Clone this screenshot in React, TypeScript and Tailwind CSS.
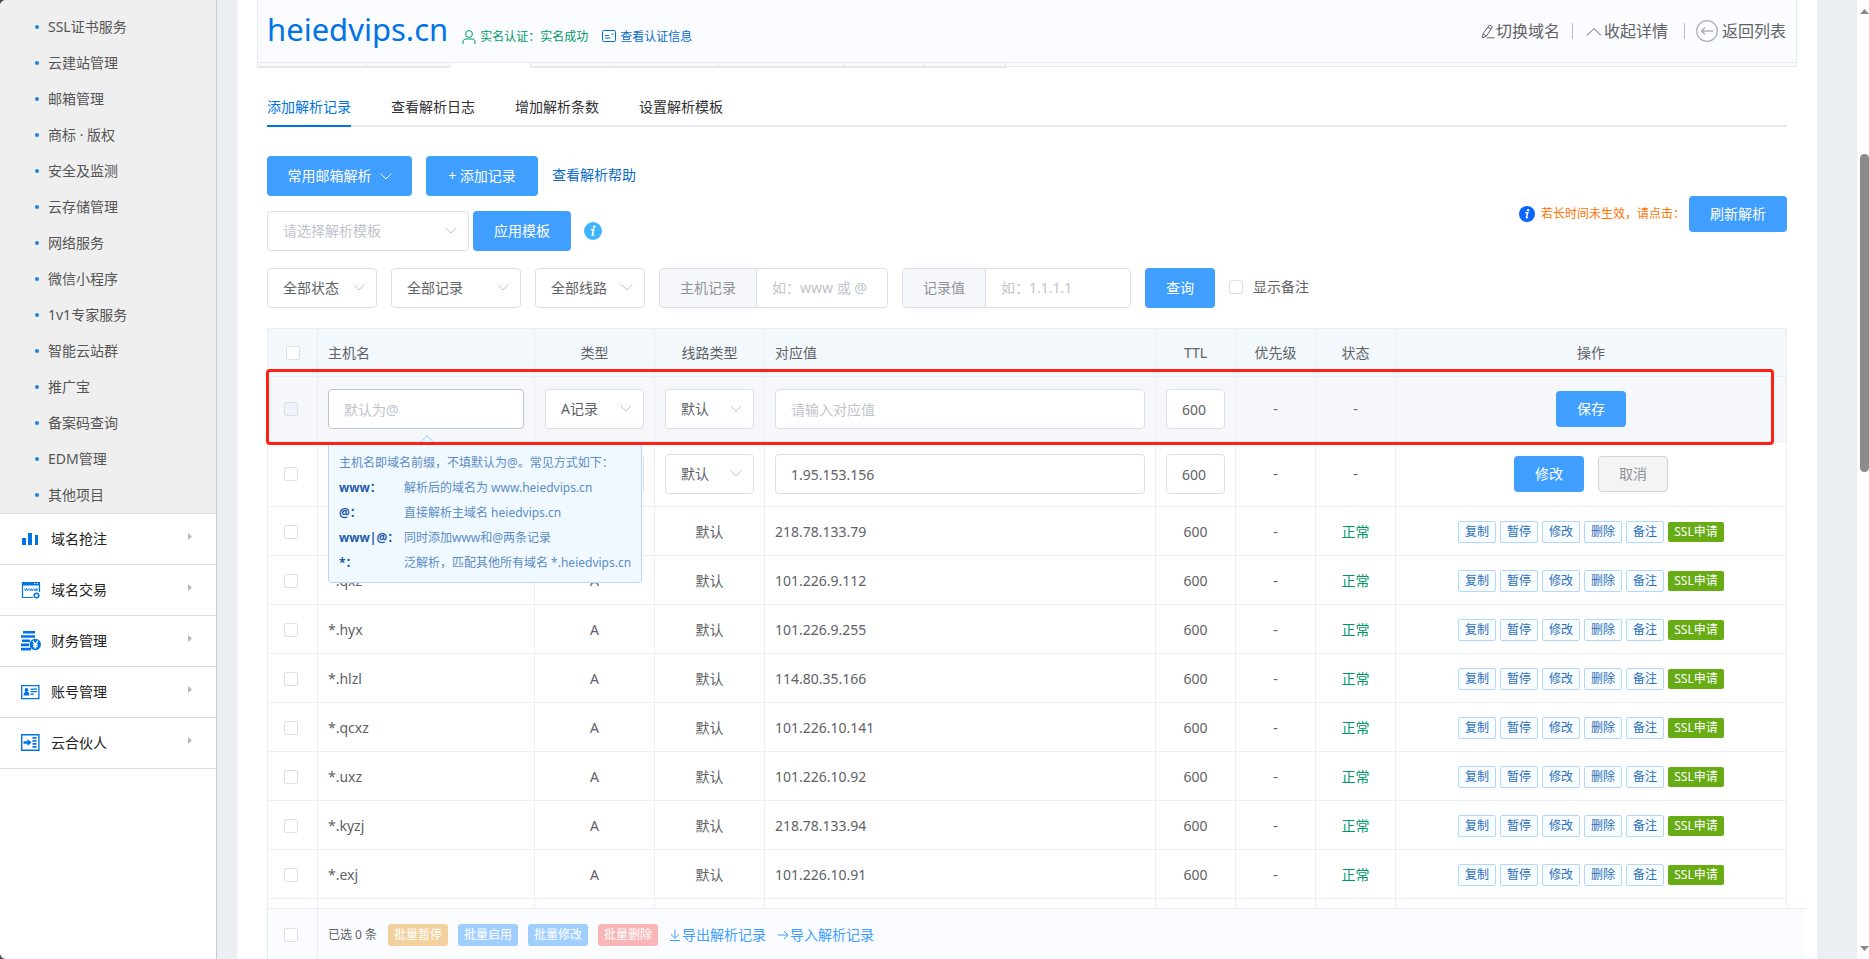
import type { ReactNode } from "react";

const subMenu = [
  "SSL证书服务",
  "云建站管理",
  "邮箱管理",
  "商标 · 版权",
  "安全及监测",
  "云存储管理",
  "网络服务",
  "微信小程序",
  "1v1专家服务",
  "智能云站群",
  "推广宝",
  "备案码查询",
  "EDM管理",
  "其他项目",
];

const mainMenu: { label: string; icon: ReactNode }[] = [
  { label: "域名抢注", icon: <BarsIcon /> },
  { label: "域名交易", icon: <BrowserIcon /> },
  { label: "财务管理", icon: <CoinsIcon /> },
  { label: "账号管理", icon: <IdCardIcon /> },
  { label: "云合伙人", icon: <PartnerIcon /> },
];

const tabs = ["添加解析记录", "查看解析日志", "增加解析条数", "设置解析模板"];

const records = [
  { host: "", value: "218.78.133.79" },
  { host: "*.qxz", value: "101.226.9.112" },
  { host: "*.hyx", value: "101.226.9.255" },
  { host: "*.hlzl", value: "114.80.35.166" },
  { host: "*.qcxz", value: "101.226.10.141" },
  { host: "*.uxz", value: "101.226.10.92" },
  { host: "*.kyzj", value: "218.78.133.94" },
  { host: "*.exj", value: "101.226.10.91" },
];

const rowActions = ["复制", "暂停", "修改", "删除", "备注"];

const hostHints = [
  { key: "www：", text: "解析后的域名为 www.heiedvips.cn" },
  { key: "@：", text: "直接解析主域名 heiedvips.cn" },
  { key: "www|@：", text: "同时添加www和@两条记录" },
  { key: "*：", text: "泛解析，匹配其他所有域名 *.heiedvips.cn" },
];

function BarsIcon() {
  return (
    <svg className="h-5 w-5" viewBox="0 0 20 20" fill="#0073e6" aria-hidden="true">
      <path d="M1 9h4v7H1zM7 4h4v12H7zM14 6h3v10h-3z" />
    </svg>
  );
}

function BrowserIcon() {
  return (
    <svg className="h-5 w-5" viewBox="0 0 20 20" fill="none" stroke="#0073e6" aria-hidden="true">
      <path d="M12 17.5H1.500v-15h17V12" strokeWidth={1.2} />
      <path d="M1 2h18v3.500H1z" fill="#0073e6" stroke="none" />
      <path d="M13 3.500h1.200M15.500 3.500h1.200" stroke="#fff" />
      <path d="M3.500 8.500l1 2.500 1-2.500 1 2.500 1-2.500M8.300 8.500l1 2.500 1-2.500 1 2.500 1-2.500M13.100 8.500l1 2.500 1-2.500 1 2.500 1-2.500" strokeWidth={0.8} />
      <circle cx="15.500" cy="15.500" r="2.300" strokeWidth={1.500} />
    </svg>
  );
}

function CoinsIcon() {
  return (
    <svg className="h-5 w-5" viewBox="0 0 20 20" fill="#0073e6" aria-hidden="true">
      <path d="M2 0h12v2.600H2zM0 4.200h14v2.600H0zM1 8.400h8v2.600H1zM0 12.600h8v2.600H0zM0 16.800h10v2.600H0z" />
      <circle cx="14.300" cy="13.500" r="5.700" />
      <path d="M11.800 9.800l2.500 3.500 2.500-3.500M14.300 13.300v4.400M12 13.500h4.600M12 15.500h4.600" fill="none" stroke="#fff" strokeWidth={1.400} />
    </svg>
  );
}

function IdCardIcon() {
  return (
    <svg className="h-5 w-5" viewBox="0 0 20 20" fill="#0073e6" aria-hidden="true">
      <path d="M.700 3.700h17.200v13H.700z" fill="none" stroke="#0073e6" strokeWidth={1.300} />
      <circle cx="5.500" cy="8" r="1.900" />
      <path d="M2.500 13.500c0-2.500 1-3.700 3-3.700s3 1.200 3 3.700z" />
      <path d="M9.500 6.500h6.500v1.200H9.500zM9.500 9h6.500v1.200H9.500zM9.500 11.500h3.500v1.200H9.500z" />
    </svg>
  );
}

function PartnerIcon() {
  return (
    <svg className="h-5 w-5" viewBox="0 0 20 20" fill="#0073e6" aria-hidden="true">
      <path d="M.700 1.700h17.200v15.500H.700z" fill="none" stroke="#0073e6" strokeWidth={1.400} />
      <path d="M2.500 8.300h4V6l4 3.500-4 3.500v-2.300h-4z" />
      <path d="M11.500 4h4v1.800h-4zM11.500 7h4v1.800h-4zM11.500 10h4v1.800h-4zM11.500 13h4v1.800h-4z" />
    </svg>
  );
}

function Chevron({ className = "" }: { className?: string }) {
  return (
    <svg className={`h-[7px] w-[12px] ${className}`} viewBox="0 0 12 7" fill="none" stroke="currentColor" aria-hidden="true">
      <path d="M.7.7L6 6 11.300.7" />
    </svg>
  );
}

function InfoIcon({ className }: { className: string }) {
  return (
    <svg className={className} viewBox="0 0 16 16" aria-hidden="true">
      <circle cx="8" cy="8" r="8" fill="currentColor" />
      <circle cx="9.100" cy="4.200" r="1.200" fill="#fff" />
      <path d="M6.300 6.700h2.400l-1.300 4.700c-.1.500.3.500 1.500-.3" fill="none" stroke="#fff" strokeWidth={1.500} />
    </svg>
  );
}

function SelectBox({ label, value, muted, className }: { label: string; value: string; muted?: boolean; className: string }) {
  return (
    <div className={`relative ${className}`}>
      <select
        aria-label={label}
        className={`h-10 w-full appearance-none rounded border border-[#dcdfe6] bg-white pl-[15px] text-sm ${muted ? "text-[#c0c4cc]" : "text-[#606266]"}`}
      >
        <option>{value}</option>
      </select>
      <Chevron className="pointer-events-none absolute right-3 top-4 text-[#c0c4cc]" />
    </div>
  );
}

function Checkbox({ label, disabled }: { label: string; disabled?: boolean }) {
  return (
    <input
      type="checkbox"
      aria-label={label}
      disabled={disabled}
      className="block h-[14px] w-[14px] shrink-0 appearance-none rounded-xs border border-[#dcdfe6] bg-white disabled:bg-[#edf2fc]"
    />
  );
}

function TextInput({ label, placeholder, value, className = "border-[#dcdfe6]" }: { label: string; placeholder?: string; value?: string; className?: string }) {
  return (
    <input
      type="text"
      aria-label={label}
      placeholder={placeholder}
      defaultValue={value}
      className={`block h-10 w-full rounded border bg-white px-[15px] text-sm text-[#606266] placeholder:text-[#c0c4cc] ${className}`}
    />
  );
}

function FilterInput({ label, placeholder }: { label: string; placeholder: string }) {
  return (
    <label className="flex h-10 w-[229px] overflow-hidden rounded border border-[#dcdfe6] text-sm">
      <span className="flex shrink-0 items-center border-r border-[#dcdfe6] bg-[#f5f7fa] px-5 text-[#909399]">{label}</span>
      <input type="text" placeholder={placeholder} className="min-w-0 flex-1 px-[15px] placeholder:text-[#c0c4cc]" />
    </label>
  );
}

function Sidebar() {
  return (
    <aside className="w-[217px] shrink-0 overflow-hidden rounded-l-md border-r border-[#c8cacd] bg-white">
      <ul className="bg-[#efefef] pt-[9px]">
        {subMenu.map((item) => (
          <li key={item}>
            <a href="#" className="flex h-9 items-center pl-[35px] text-sm text-[#555]">
              <span className="mr-[9px] h-1 w-1 rounded-full bg-[#1a82e8]" />
              {item}
            </a>
          </li>
        ))}
      </ul>
      <ul className="border-b border-[#ddd]">
        {mainMenu.map((item) => (
          <li key={item.label}>
            <a href="#" className="flex h-[51px] items-center border-t border-[#ddd] pl-[21px] pr-6 text-sm text-[#222]">
              {item.icon}
              <span className="ml-[10px] flex-1">{item.label}</span>
              <svg className="mb-[6px] h-[7px] w-1" viewBox="0 0 4 7" fill="#b8b8b8" aria-hidden="true">
                <path d="M0 0l4 3.500L0 7z" />
              </svg>
            </a>
          </li>
        ))}
      </ul>
    </aside>
  );
}

function DomainHeader() {
  return (
    <header className="mx-5 flex h-[63px] items-center justify-between border-x border-b border-[#e6ebf2] bg-[#fafcff] pb-1 pl-[9px] pr-[10px]">
      <div className="flex items-baseline text-xs">
        <h1 className="text-[31px] leading-10 text-[#0073e6]">heiedvips.cn</h1>
        <span className="ml-[14px] flex items-baseline gap-1 text-[#009966]">
          <svg className="h-[14px] w-[14px] self-center" viewBox="0 0 14 14" fill="none" stroke="currentColor" aria-hidden="true">
            <circle cx="7" cy="4" r="3.400" />
            <path d="M1 14v-2c0-2 1-3 3-3h6c2 0 3 1 3 3v2" />
          </svg>
          实名认证：实名成功
        </span>
        <a href="#" className="ml-[14px] flex items-baseline gap-1 text-[#0a6ccc]">
          <svg className="h-[14px] w-[14px] self-center" viewBox="0 0 14 14" fill="none" stroke="currentColor" aria-hidden="true">
            <rect x=".5" y=".5" width="13" height="11" rx="1" />
            <path d="M3 5.500h4M3 8h5M9.500 4h2" />
          </svg>
          查看认证信息
        </a>
      </div>
      <nav className="flex items-center pt-1 text-base text-[#606266]">
        <a href="#" className="flex items-center">
          <svg className="h-[15px] w-[15px]" viewBox="0 0 15 15" fill="none" stroke="currentColor" aria-hidden="true">
            <path d="M8.500 1L11.500 2.800 5.500 12 1.500 14 2 9.800zM7 3.300l3 1.900M2 9.800l3.500 2.200M6 13.800h7.500" />
          </svg>
          切换域名
        </a>
        <span className="ml-3 mr-[13px] h-4 w-px bg-[#bbb]" />
        <a href="#" className="flex items-center gap-[2px]">
          <svg className="h-[9px] w-4" viewBox="0 0 16 9" fill="none" stroke="currentColor" aria-hidden="true">
            <path d="M1 8.500L8 1.500l7 7" />
          </svg>
          收起详情
        </a>
        <span className="ml-4 mr-[11px] h-4 w-px bg-[#bbb]" />
        <a href="#" className="flex items-center gap-1">
          <svg className="h-[22px] w-[22px]" viewBox="0 0 22 22" fill="none" stroke="#b0b0b0" aria-hidden="true">
            <circle cx="11" cy="11" r="10.300" strokeWidth={1.200} />
            <path d="M17 11H5.500M9 7.500L5.500 11 9 14.500" strokeWidth={1.500} />
          </svg>
          返回列表
        </a>
      </nav>
    </header>
  );
}

// Lower edge of the section tabs that scroll under the domain header
function TabStrip() {
  return (
    <div className="mx-5 flex h-[5px]">
      <div className="w-[109px] border-b-2 border-l border-[#e8e8e8] bg-[#fafafa]" />
      <div className="w-[84px] border-b-2 border-x border-[#e8e8e8] bg-[#fafafa]" />
      <div className="w-20 bg-white" />
      <div className="w-20 border-b-2 border-l border-[#e8e8e8] bg-[#fafafa]" />
      <div className="w-[108px] border-b-2 border-l border-[#e8e8e8] bg-[#fafafa]" />
      <div className="w-[125px] border-b-2 border-l border-[#e8e8e8] bg-[#fafafa]" />
      <div className="w-[81px] border-b-2 border-l border-[#e8e8e8] bg-[#fafafa]" />
      <div className="w-[82px] border-b-2 border-x border-[#e8e8e8] bg-[#fafafa]" />
      <div className="h-1 flex-1 border-b border-r border-[#e8e8e8] bg-[#fcfcfc]" />
    </div>
  );
}

function HostTooltip() {
  return (
    <div role="tooltip" className="absolute left-[61px] top-[114px] w-[314px] rounded border border-[#b3d8ff] bg-[#f0f9ff] px-[10px] py-[7px] text-xs leading-[25px] text-[#5b8cc6]">
      <span className="absolute -top-[6px] left-[93px] h-[10px] w-[10px] rotate-45 border-l border-t border-[#b3d8ff] bg-[#f0f9ff]" />
      <p className="whitespace-nowrap">主机名即域名前缀，不填默认为@。常见方式如下：</p>
      <dl className="grid grid-cols-[65px_1fr] whitespace-nowrap">
        {hostHints.map((hint) => (
          <div key={hint.key} className="contents">
            <dt className="font-bold text-[#1f5ca8]">{hint.key}</dt>
            <dd>{hint.text}</dd>
          </div>
        ))}
      </dl>
    </div>
  );
}

function RecordTable() {
  return (
    <div className="relative mt-5">
      <table className="w-full table-fixed border-separate border-spacing-0 border-l border-t border-[#ebeef5] text-center text-sm [&_td]:border-b [&_td]:border-r [&_td]:border-[#ebeef5] [&_td]:px-[10px] [&_th]:border-b [&_th]:border-r [&_th]:border-[#ebeef5] [&_th]:px-[10px] [&_th]:font-normal">
        <colgroup>
          <col className="w-[50px]" />
          <col className="w-[217px]" />
          <col className="w-[120px]" />
          <col className="w-[110px]" />
          <col />
          <col className="w-20" />
          <col className="w-20" />
          <col className="w-20" />
          <col />
        </colgroup>
        <thead>
          <tr className="h-12 bg-[#f3f8fd]">
            <th>
              <div className="flex justify-center">
                <Checkbox label="全选" />
              </div>
            </th>
            <th className="text-left">主机名</th>
            <th>类型</th>
            <th>线路类型</th>
            <th className="text-left">对应值</th>
            <th>TTL</th>
            <th>优先级</th>
            <th>状态</th>
            <th>操作</th>
          </tr>
        </thead>
        <tbody>
          <tr className="h-[65px] bg-[#f5f7fa]">
            <td>
              <div className="flex pl-[6px]">
                <Checkbox label="新记录" disabled />
              </div>
            </td>
            <td>
              <TextInput label="主机名" placeholder="默认为@" className="border-[#c0c4cc]" />
            </td>
            <td>
              <SelectBox label="类型" value="A记录" className="w-full" />
            </td>
            <td>
              <SelectBox label="线路类型" value="默认" className="w-full" />
            </td>
            <td>
              <TextInput label="对应值" placeholder="请输入对应值" />
            </td>
            <td>
              <TextInput label="TTL" value="600" />
            </td>
            <td>-</td>
            <td>-</td>
            <td>
              <button type="button" className="h-9 w-[70px] rounded bg-[#409eff] text-white">
                保存
              </button>
            </td>
          </tr>
          <tr className="h-[65px]">
            <td>
              <div className="flex pl-[6px]">
                <Checkbox label="编辑中的记录" />
              </div>
            </td>
            <td>
              <TextInput label="主机名" />
            </td>
            <td>
              <SelectBox label="类型" value="" className="w-full" />
            </td>
            <td>
              <SelectBox label="线路类型" value="默认" className="w-full" />
            </td>
            <td>
              <TextInput label="对应值" value="1.95.153.156" />
            </td>
            <td>
              <TextInput label="TTL" value="600" />
            </td>
            <td>-</td>
            <td>-</td>
            <td>
              <div className="flex justify-center gap-[14px]">
                <button type="button" className="h-9 w-[70px] rounded bg-[#409eff] text-white">
                  修改
                </button>
                <button type="button" className="h-9 w-[70px] rounded border border-[#d3d4d6] bg-[#f4f4f5] text-[#909399]">
                  取消
                </button>
              </div>
            </td>
          </tr>
          {records.map((record) => (
            <tr key={record.value} className="h-[49px] [&>td]:pt-[2px]">
              <td>
                <div className="flex pl-[6px]">
                  <Checkbox label={record.value} />
                </div>
              </td>
              <td className="text-left">{record.host}</td>
              <td>{record.host && "A"}</td>
              <td>默认</td>
              <td className="text-left">{record.value}</td>
              <td>600</td>
              <td>-</td>
              <td className="text-[#009966]">正常</td>
              <td>
                <div className="flex items-center justify-center gap-1 text-xs">
                  {rowActions.map((action) => (
                    <button key={action} type="button" className="h-[22px] w-[38px] rounded-xs border border-[#b3d8ff] bg-[#f8fcff] text-[#2b70ba]">
                      {action}
                    </button>
                  ))}
                  <button type="button" className="h-5 w-14 whitespace-nowrap rounded-xs bg-[#67ab15] text-white">
                    SSL申请
                  </button>
                </div>
              </td>
            </tr>
          ))}
          <tr className="h-[49px]">
            <td />
            <td />
            <td />
            <td />
            <td />
            <td />
            <td />
            <td />
            <td />
          </tr>
        </tbody>
      </table>
      <HostTooltip />
      <div className="pointer-events-none absolute -left-px right-[13px] top-[41px] h-[76px] rounded border-[3px] border-[#ff2114]" />
    </div>
  );
}

function BatchBar() {
  return (
    <footer className="ml-[30px] mr-3 flex h-[51px] shrink-0 border-l border-t border-[#e6ebf5] bg-[#fafcff] text-xs">
      <div className="flex w-[50px] items-center border-r border-[#e6ebf5] pl-4 pt-[2px]">
        <Checkbox label="选择全部记录" />
      </div>
      <div className="flex items-center gap-[10px] pl-[10px] pt-[2px] text-white">
        <span className="w-[50px] whitespace-nowrap text-[#606266]">已选 0 条</span>
        <button type="button" className="h-[22px] w-[60px] rounded-[3px] bg-[#f3d19e]">批量暂停</button>
        <button type="button" className="h-[22px] w-[60px] rounded-[3px] bg-[#a0cfff]">批量启用</button>
        <button type="button" className="h-[22px] w-[60px] rounded-[3px] bg-[#a0cfff]">批量修改</button>
        <button type="button" className="h-[22px] w-[60px] rounded-[3px] bg-[#fab6b6]">批量删除</button>
        <a href="#" className="flex items-center text-sm text-[#409eff]">
          <svg className="h-[14px] w-[14px]" viewBox="0 0 14 14" fill="none" stroke="currentColor" aria-hidden="true">
            <path d="M7 1.500v8.500M3 6.500L7 10.300l4-3.800M2 12.500h10" />
          </svg>
          导出解析记录
        </a>
        <a href="#" className="flex items-center text-sm text-[#409eff]">
          <svg className="h-[14px] w-[14px]" viewBox="0 0 14 14" fill="none" stroke="currentColor" aria-hidden="true">
            <path d="M2 7h10M8 3l4 4-4 4" />
          </svg>
          导入解析记录
        </a>
      </div>
    </footer>
  );
}

function ScrollBar() {
  return (
    <div className="flex w-3 shrink-0 flex-col items-end bg-[#fcfcfc] pb-2 pt-[9px]" aria-hidden="true">
      <svg className="h-[5px] w-[9px]" viewBox="0 0 9 5" fill="#8b8b8b">
        <path d="M4.500 0L9 5H0z" />
      </svg>
      <div className="mt-[140px] h-[318px] w-[9px] rounded-full bg-[#8b8b8b]" />
      <svg className="mt-auto h-[5px] w-[9px]" viewBox="0 0 9 5" fill="#8b8b8b">
        <path d="M4.500 5L9 0H0z" />
      </svg>
    </div>
  );
}

export default function App() {
  return (
    <div className="flex h-screen overflow-hidden bg-[#4a4a4a] font-['Noto_Sans','Noto_Sans_CJK_SC',sans-serif] text-[#606266]">
      <Sidebar />
      <div className="flex min-w-0 flex-1 bg-[#ebeef3] pl-5 pr-10">
        <main className="flex min-w-0 flex-1 flex-col bg-white">
          <div className="min-h-0 flex-1 overflow-hidden">
            <DomainHeader />
            <TabStrip />
            <div className="mx-[30px] pt-6">
              <nav className="flex h-[35px] gap-10 border-b-2 border-[#e4e7ed] text-sm text-[#303133]">
                {tabs.map((tab, i) => (
                  <a key={tab} href="#" className={i === 0 ? "-mb-[2px] border-b-2 border-[#0073e6] leading-[30px] text-[#0073e6]" : "leading-[30px]"}>
                    {tab}
                  </a>
                ))}
              </nav>

              <div className="mt-[29px] flex items-start justify-between text-sm">
                <div>
                  <div className="flex items-center gap-[14px]">
                    <button type="button" className="flex h-10 w-[145px] items-center justify-center gap-2 rounded bg-[#409eff] text-white">
                      常用邮箱解析
                      <Chevron />
                    </button>
                    <button type="button" className="h-10 w-28 rounded bg-[#409eff] text-white">
                      + 添加记录
                    </button>
                    <a href="#" className="pb-[2px] text-[#0a6ccc]">
                      查看解析帮助
                    </a>
                  </div>
                  <div className="mt-[15px] flex items-center">
                    <SelectBox label="解析模板" value="请选择解析模板" muted className="w-[202px]" />
                    <button type="button" className="ml-1 h-10 w-[98px] rounded bg-[#409eff] text-white">
                      应用模板
                    </button>
                    <InfoIcon className="ml-[13px] h-[18px] w-[18px] text-[#40b5ff]" />
                  </div>
                </div>
                <div className="mt-10 flex items-center">
                  <InfoIcon className="mr-[6px] h-4 w-4 text-[#0a64ff]" />
                  <span className="text-xs text-[#ff7300]">若长时间未生效，请点击：</span>
                  <button type="button" className="ml-1 h-9 w-[98px] rounded bg-[#409eff] text-white">
                    刷新解析
                  </button>
                </div>
              </div>

              <div className="mt-[17px] flex items-center gap-[14px] text-sm">
                <SelectBox label="状态" value="全部状态" className="w-[110px]" />
                <SelectBox label="记录类型" value="全部记录" className="w-[130px]" />
                <SelectBox label="线路" value="全部线路" className="w-[110px]" />
                <FilterInput label="主机记录" placeholder="如：www 或 @" />
                <FilterInput label="记录值" placeholder="如：1.1.1.1" />
                <button type="button" className="h-10 w-[70px] rounded bg-[#409eff] text-white">
                  查询
                </button>
                <label className="flex items-center gap-[10px] pb-[2px]">
                  <Checkbox label="显示备注" />
                  显示备注
                </label>
              </div>

              <RecordTable />
            </div>
          </div>
          <BatchBar />
        </main>
      </div>
      <ScrollBar />
    </div>
  );
}
